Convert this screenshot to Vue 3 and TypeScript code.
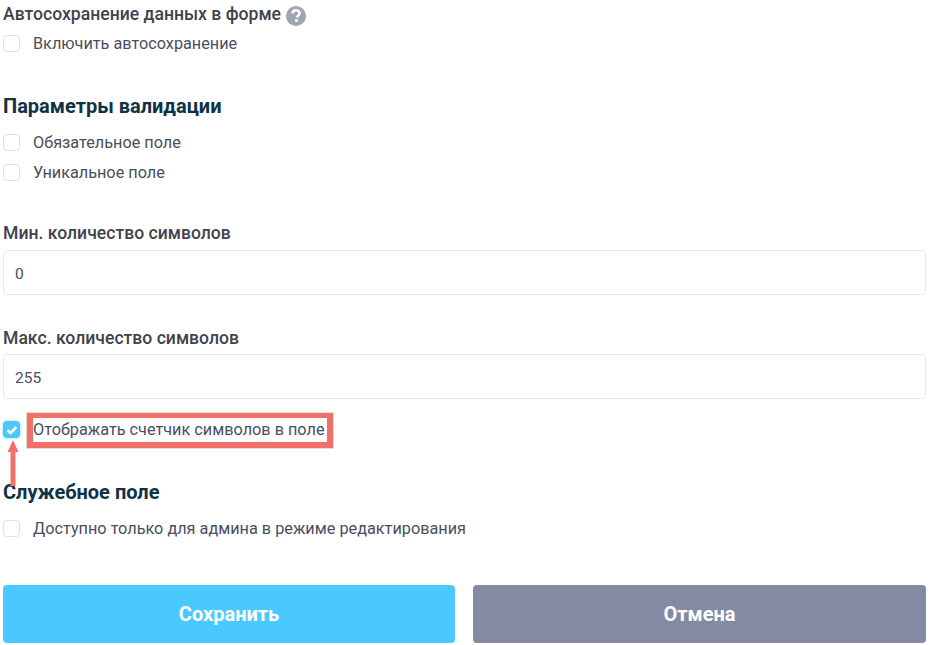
<template>
  <div class="form">
    <div class="title-row">
      <span class="label">Автосохранение данных в форме</span>
      <svg class="help" viewBox="0 0 20 20" width="20" height="20">
        <circle cx="10" cy="10" r="10" fill="#a0a4b3" />
        <path d="M6.6 7.6c0-2 1.5-3.3 3.5-3.3s3.4 1.2 3.4 2.9c0 2.4-2.6 2.4-2.6 4.3" fill="none" stroke="#fff" stroke-width="2.6" />
        <rect x="9.1" y="13.2" width="2.7" height="2.7" fill="#fff" />
      </svg>
    </div>
    <label class="check first">
      <span class="box"></span>
      <span>Включить автосохранение</span>
    </label>

    <h3 class="section validation">Параметры валидации</h3>
    <label v-for="item in validation" :key="item" class="check row">
      <span class="box"></span>
      <span>{{ item }}</span>
    </label>

    <div class="label field-label min">Мин. количество символов</div>
    <input class="input" type="text" value="0" />

    <div class="label field-label max">Макс. количество символов</div>
    <input class="input" type="text" value="255" />

    <label class="check counter">
      <span class="box checked">
        <svg viewBox="0 0 12 12" width="12" height="12">
          <path d="M1.6 6.2 4.6 9 10.4 3" fill="none" stroke="#fff" stroke-width="2.6" />
        </svg>
      </span>
      <span>Отображать счетчик символов в поле</span>
      <span class="highlight"></span>
      <svg class="arrow" viewBox="0 0 14 46" width="14" height="46">
        <path d="M7 0 12.5 12H9.5V46H4.5V12H1.5Z" fill="#f2706a" />
      </svg>
    </label>

    <h3 class="section service">Служебное поле</h3>
    <label class="check service-check">
      <span class="box"></span>
      <span>Доступно только для админа в режиме редактирования</span>
    </label>

    <div class="actions">
      <button class="btn save">Сохранить</button>
      <button class="btn cancel">Отмена</button>
    </div>
  </div>
</template>

<script setup lang="ts">
const validation: string[] = ['Обязательное поле', 'Уникальное поле'];
</script>

<style>
html, body {
  margin: 0;
  background: #fff;
}
</style>

<style scoped>
.form {
  box-sizing: border-box;
  width: 929px;
  height: 645px;
  padding: 0 3px;
  overflow: hidden;
  font-family: Roboto, "Liberation Sans", sans-serif;
  font-size: 16.25px;
  color: #4a4e5e;
}

.title-row {
  display: flex;
  align-items: center;
  gap: 5px;
  height: 30px;
  margin-top: -1px;
}

.label {
  font-size: 17.6px;
  font-weight: 500;
  color: #41434c;
  line-height: 30px;
}

.help {
  flex: none;
  margin-top: 4px;
}

.check {
  position: relative;
  display: flex;
  align-items: center;
  gap: 13px;
  height: 30px;
  line-height: 30px;
}

.box {
  box-sizing: border-box;
  flex: none;
  display: flex;
  align-items: center;
  justify-content: center;
  width: 17px;
  height: 17px;
  border: 1px solid #dcdfe6;
  border-radius: 4px;
  background: #fff;
  margin-top: -1px;
}

.box.checked {
  border-color: #49c9ff;
  background: #49c9ff;
  box-shadow: 0 0 2px #49c9ff;
}

.section {
  margin: 0;
  font-size: 20px;
  font-weight: 700;
  line-height: 30px;
  color: #0e3347;
}

.validation {
  margin-top: 32px;
  margin-bottom: 7px;
}

.field-label {
  height: 30px;
}

.min {
  margin-top: 30px;
  margin-bottom: 2px;
}

.max {
  margin-top: 28px;
  margin-bottom: 1px;
}

.input {
  box-sizing: border-box;
  display: block;
  width: 100%;
  height: 45px;
  padding: 2px 11px 0;
  border: 1px solid #e8e9f0;
  border-radius: 4px;
  outline: none;
  font: 400 15.5px Roboto, "Liberation Sans", sans-serif;
  color: #4a4e5e;
  background: #fff;
}

.counter {
  margin-top: 16px;
}

.highlight {
  position: absolute;
  left: 24px;
  top: -2px;
  box-sizing: border-box;
  width: 306px;
  height: 35px;
  border-style: solid;
  border-color: #f2706a;
  border-width: 5px 6px 6px;
  box-shadow: 0 0 0 1px rgba(190, 160, 120, 0.35);
}

.arrow {
  position: absolute;
  left: 3px;
  top: 25px;
}

.service {
  margin-top: 32px;
  margin-bottom: 7px;
}

.actions {
  display: grid;
  grid-template-columns: 452px 1fr;
  gap: 18px;
  margin-top: 41px;
}

.btn {
  height: 58px;
  border: none;
  border-radius: 4px;
  font: 700 20px Roboto, "Liberation Sans", sans-serif;
  color: #fff;
}

.save {
  background: #49c9ff;
}

.cancel {
  background: #838ba3;
}
</style>
